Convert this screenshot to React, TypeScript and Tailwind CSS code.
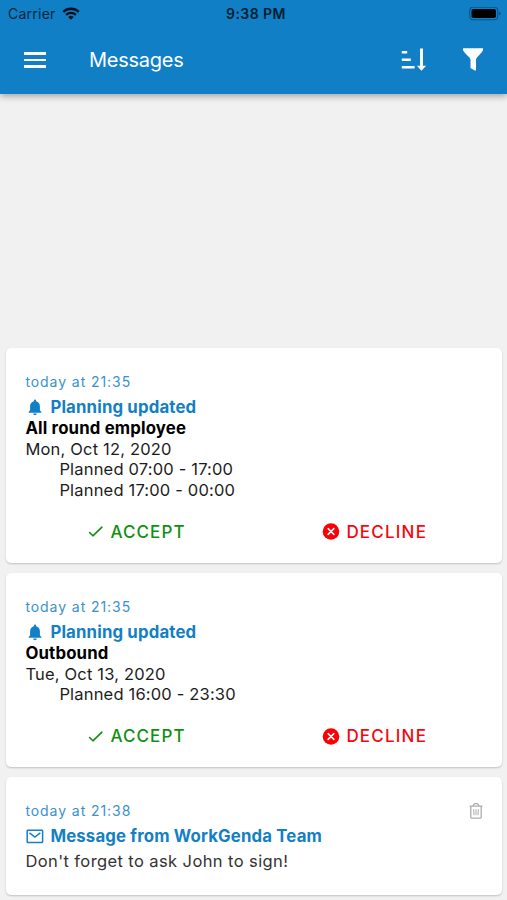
import type { ReactNode } from "react";

function Bell() {
  return (
    <svg viewBox="0 0 20 20" className="h-5 w-5 shrink-0" fill="currentColor">
      <path d="M10 17.200a1.900 1.900 0 0 0 1.900-1.700H8.100A1.900 1.900 0 0 0 10 17.200zM14.900 12.300V8.400c0-2.700-1.500-4.600-3.800-5.200v-.5a1.100 1.100 0 0 0-2.200 0v.5C6.600 3.800 5.100 5.700 5.100 8.400v3.900l-1.500 1.600v.9h12.800v-.9z" />
    </svg>
  );
}

function Mail() {
  return (
    <svg viewBox="0 0 20 20" className="h-5 w-5 shrink-0" fill="none" stroke="currentColor" strokeWidth="1.500">
      <rect x="2.200" y="3.200" width="15.400" height="12.200" rx="0.600" />
      <path d="M4.500 5.900L9.900 10l5.400-4.100" />
    </svg>
  );
}

function Trash() {
  return (
    <svg viewBox="0 0 16 18" className="mb-[2px] h-[18px] w-4" fill="none" stroke="#adadad" strokeWidth="1.300">
      <path d="M2.800 4.500V15a1.200 1.200 0 0 0 1.200 1.200h8a1.200 1.200 0 0 0 1.200-1.200V4.500M1.500 4.200h13M4.800 4L6.200 2q.3-.4.800-.4h2q.5 0 .8.400L11.200 4" />
      <path d="M5.700 7.200l.3 6M8 7.200v6M10.300 7.200l-.3 6" strokeWidth="1" />
    </svg>
  );
}

function Actions() {
  return (
    <div className="mt-[21px] flex h-[21px] items-center text-[17px] font-medium tracking-[1.100px]">
      <button className="ml-[62px] flex w-[235px] items-center text-[#109010]">
        <svg viewBox="0 0 18 18" className="mr-[5px] h-[18px] w-[18px]" fill="none" stroke="currentColor" strokeWidth="1.600" strokeLinecap="round" strokeLinejoin="round">
          <path d="M2.600 9.500l3.300 3.300L14.900 4.200" />
        </svg>
        ACCEPT
      </button>
      <button className="flex items-center tracking-[1.200px] text-[#f4080e]">
        <svg viewBox="0 0 18 18" className="mr-[6px] h-[18px] w-[18px]">
          <circle cx="9" cy="8.500" r="8.300" fill="#fb0007" />
          <path d="M6.100 5.600l5.800 5.800M11.900 5.600l-5.800 5.800" stroke="white" strokeWidth="1.500" strokeLinecap="round" />
        </svg>
        DECLINE
      </button>
    </div>
  );
}

function Card({ time, icon, title, className, children, deletable }: {
  time: string; icon: ReactNode; title: string; className: string; children: ReactNode; deletable?: boolean;
}) {
  return (
    <article className={`rounded-[5px] bg-white pl-[19.400px] pr-[18px] pt-6 shadow-[0_1px_2px_rgba(0,0,0,0.20)] ${className}`}>
      <div className="flex h-[21px] items-center justify-between text-[14px] tracking-[0.930px] text-[#3a91cc]">
        <span>{time}</span>
        {deletable && <button aria-label="Delete message"><Trash /></button>}
      </div>
      <h2 className="mt-1 flex h-[21px] items-center gap-[5px] text-[16.800px] font-bold tracking-[0.150px] text-[#137fc4]">
        {icon}
        <span>{title}</span>
      </h2>
      {children}
    </article>
  );
}

export default function App() {
  return (
    <div className="flex h-[900px] w-[507px] flex-col overflow-hidden bg-[#f1f1f1] font-['Inter',sans-serif] text-[16.500px] leading-[20.700px] tracking-[0.180px] text-[#1c1c1c]">
      <header className="z-10 h-[94px] shrink-0 bg-[#107fc5] tracking-normal text-white shadow-[0_2px_7px_rgba(0,0,0,0.35)]">
        <div className="grid h-[28px] grid-cols-[1fr_auto_1fr] items-center pl-2 pr-[6px] text-[14px] text-[#06253b]">
          <div className="flex items-center gap-[6px]">
            <span className="tracking-[0.250px]">Carrier</span>
            <svg viewBox="0 0 18 13" className="mb-px h-[13px] w-[18px]" fill="none" stroke="#02121e" strokeWidth="2.300">
              <path d="M1.200 4.900a11.200 11.200 0 0 1 15.600 0M4.100 7.900a7 7 0 0 1 9.800 0" />
              <path d="M6.200 10a4 4 0 0 1 5.600 0L9 12.800z" fill="#02121e" stroke="none" />
            </svg>
          </div>
          <span className="pl-[3px] text-center font-semibold tracking-[0.450px] text-[#031e31]">9:38 PM</span>
          <svg viewBox="0 0 32 14" className="h-[14px] w-8 justify-self-end">
            <rect x="0.700" y="0.200" width="28" height="12.600" rx="3.500" fill="none" stroke="#075689" strokeWidth="1.100" />
            <rect x="2.500" y="2" width="24.400" height="9" rx="1.800" fill="#000" />
            <path d="M30 4.500v4q1.500-.5 1.500-2T30 4.500z" fill="#075689" />
          </svg>
        </div>
        <div className="flex h-[64px] items-center pl-6 pr-6">
          <button aria-label="Menu" className="flex w-[22px] flex-col gap-[4px]">
            <span className="h-[2.500px] bg-white" />
            <span className="h-[2.500px] bg-white" />
            <span className="h-[2.500px] bg-white" />
          </button>
          <h1 className="ml-[43px] text-[20px] font-normal leading-6 tracking-[-0.250px]">Messages</h1>
          <svg viewBox="0 0 26 24" className="ml-auto h-6 w-[26px]" fill="none" stroke="white">
            <path d="M0.800 4.200h5.400M0.800 11.700h9M0.800 19.200h12.800" strokeWidth="2.400" />
            <path d="M20.500 0.500v19" strokeWidth="2.900" />
            <path d="M15.900 17.800h9.200L20.500 22.700z" fill="white" stroke="none" />
          </svg>
          <svg viewBox="0 0 20 24" className="ml-[36px] h-6 w-5" fill="white">
            <path d="M0 .3h20v1.600c-.4 2.500-7 7.500-7 9.700v11h-1.300L7.500 20v-8.400C7.500 9.400.4 4.400 0 1.900z" />
          </svg>
        </div>
      </header>
      <main className="flex flex-col gap-[10px] pl-[6px] pr-[5px] pt-[254px]">
        <Card className="h-[215px]" time="today at 21:35" icon={<Bell />} title="Planning updated">
          <p className="font-bold text-[16.800px] tracking-[0.150px] text-black">All round employee</p>
          <p>Mon, Oct 12, 2020</p>
          <div className="pl-[34px]">
            <p>Planned 07:00 - 17:00</p>
            <p>Planned 17:00 - 00:00</p>
          </div>
          <Actions />
        </Card>
        <Card className="h-[194px]" time="today at 21:35" icon={<Bell />} title="Planning updated">
          <p className="font-bold text-[16.800px] tracking-[0.150px] text-black">Outbound</p>
          <p>Tue, Oct 13, 2020</p>
          <p className="pl-[34px]">Planned 16:00 - 23:30</p>
          <Actions />
        </Card>
        <Card className="h-[118px]" time="today at 21:38" icon={<Mail />} title="Message from WorkGenda Team" deletable>
          <p className="mt-1 tracking-[0.400px] text-[#333]">Don't forget to ask John to sign!</p>
        </Card>
      </main>
    </div>
  );
}
